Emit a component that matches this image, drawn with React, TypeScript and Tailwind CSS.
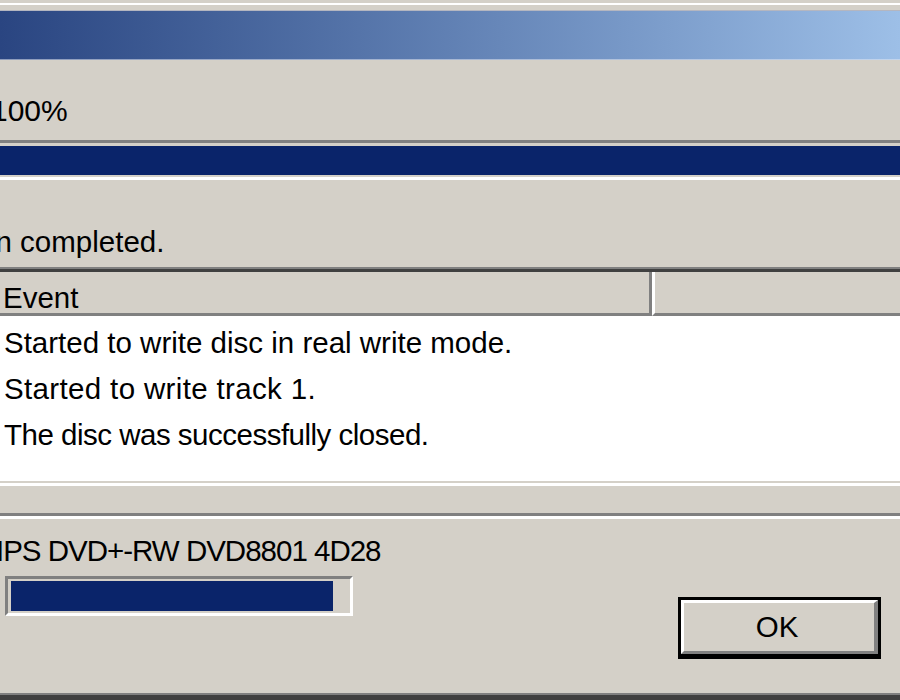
import React from "react";

const events = [
  { text: "Started to write disc in real write mode.", track: "tracking-[0px]" },
  { text: "Started to write track 1.", track: "tracking-[0.35px]" },
  { text: "The disc was successfully closed.", track: "tracking-[-0.5px]" },
];

const App = () => {
  return (
    <div className="w-[900px] h-[700px] overflow-hidden bg-[#d4d0c8] text-black font-['Liberation_Sans',Arial,sans-serif] text-[29.5px] leading-[33px]">
      {/* Window frame + caption */}
      <div className="h-[3px]" />
      <div className="h-[2px] bg-white" />
      <div className="h-[5px]" />
      <div className="h-[1px] bg-[#b4b6c0]" />
      <div className="h-[48px] bg-gradient-to-r from-[#2a4581] to-[#9dbfe7]" />
      <div className="h-[1px] bg-gradient-to-r from-[#8e9cbc] to-[#c2d4ec]" />

      {/* Total progress */}
      <div className="h-[80px] pt-[34px]">
        <div className="ml-[-9px] text-[30px] leading-[34px] whitespace-nowrap">100%</div>
      </div>
      <div className="h-[40px] border-t-[3px] border-b-[3px] border-t-[#808080] border-b-white pt-[3px]">
        <div className="h-[29px] bg-[#0a246a]" />
      </div>

      {/* Status */}
      <div className="h-[87px] pt-[45px]">
        <div className="ml-[-4.5px] whitespace-nowrap">n completed.</div>
      </div>

      {/* Event list */}
      <div className="h-[2px] bg-[#808080]" />
      <div className="h-[3px] bg-[#404040]" />
      <div className="flex h-[44px]">
        <div className="w-[652px] shrink-0 border-r-[3px] border-b-[3px] border-[#808080] pl-[3px] pt-[9px] whitespace-nowrap">
          Event
        </div>
        <div className="flex-1 border-l-[3px] border-l-white border-b-[3px] border-b-[#808080]" />
      </div>
      <div className="h-[165px] bg-white pt-[4px]">
        {events.map((e) => (
          <div key={e.text} className={`pl-[4px] leading-[46px] whitespace-nowrap ${e.track}`}>
            {e.text}
          </div>
        ))}
      </div>
      <div className="h-[2px] bg-[#d4d0c8]" />
      <div className="h-[3px] bg-white" />

      <div className="h-[27px]" />
      <div className="h-[3px] bg-[#808080]" />
      <div className="h-[3px] bg-white" />

      {/* Drive + OK */}
      <div className="h-[174px] flex items-start">
        <div className="pt-[15px]">
          <div className="ml-[-4px] whitespace-nowrap tracking-[-1px]">IPS DVD+-RW DVD8801 4D28</div>
          <div className="ml-[5px] mt-[9px] w-[348px] h-[40px] border-[3px] border-t-[#808080] border-l-[#808080] border-b-white border-r-white pt-[2px] pl-[3px]">
            <div className="w-[322px] h-[30px] bg-[#0a246a]" />
          </div>
        </div>
        <button className="ml-auto mr-[19px] mt-[78px] w-[203px] h-[62px] border-t-[3px] border-l-[3px] border-r-[3px] border-b-[5px] border-black bg-[#d4d0c8]">
          <div className="h-full border-t-[3px] border-l-[3px] border-t-white border-l-white border-r-[4px] border-b-[3px] border-r-[#808080] border-b-[#808080] flex items-center justify-center pr-[4px] leading-[48px]">
            OK
          </div>
        </button>
      </div>

      <div className="h-[2px] bg-[#808080]" />
      <div className="h-[5px] bg-[#404040]" />
    </div>
  );
};

export default App;
